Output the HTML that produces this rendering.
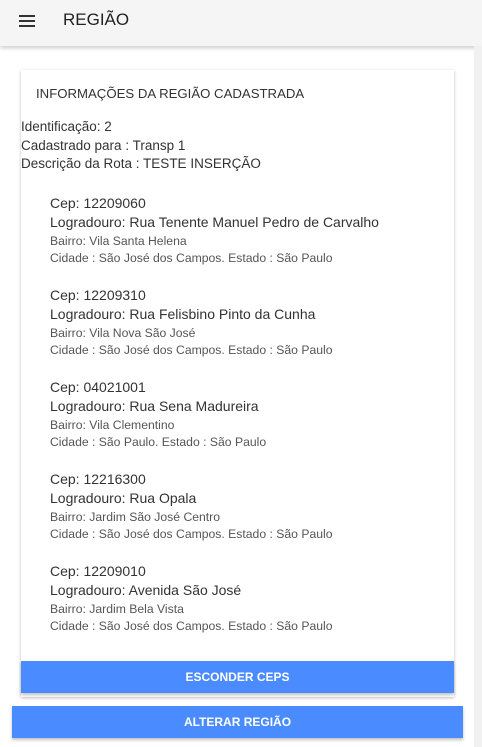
<!DOCTYPE html>
<html><head><meta charset="utf-8"><style>
*{margin:0;padding:0;box-sizing:border-box}
body{width:482px;height:747px;background:#fff;font-family:"Liberation Sans",sans-serif;color:#333;position:relative;overflow:hidden}
.hdr{position:absolute;left:0;top:0;width:482px;height:46px;background:#f5f5f5;box-shadow:0 2px 4px rgba(0,0,0,.2)}
.hdr .t{position:absolute;left:63px;top:10px;font-size:17px;color:#222}
.bar{position:absolute;left:19px;width:16px;height:2px;background:#333}
.sb{position:absolute;right:0;top:46px;width:8px;height:701px;background:#f1f1f1}
.card{position:absolute;left:21px;top:70px;width:433px;height:627px;background:#fff;box-shadow:0 1px 3px rgba(0,0,0,.25)}
.a{position:absolute;white-space:nowrap}
.blk{position:absolute;left:50px;white-space:nowrap}
.blk div{font-size:14px;line-height:18.5px;height:18.5px}
.blk div.s{font-size:12.2px;color:#555;line-height:17px;height:17px;position:relative;top:1.5px}
.btn{position:absolute;background:#4a8cff;color:#fff;font-weight:bold;font-size:12px;text-align:center;box-shadow:0 2px 3px rgba(0,0,0,.25)}
</style></head><body>
<div class="hdr"><div class="bar" style="top:15px"></div><div class="bar" style="top:20px"></div><div class="bar" style="top:25px"></div><div class="t">REGIÃO</div></div>
<div class="sb"></div>
<div class="card"></div>
<div class="a" style="left:36px;top:86px;font-size:13.2px">INFORMAÇÕES DA REGIÃO CADASTRADA</div>
<div class="a" style="left:21px;top:118px;font-size:13.5px;line-height:18.5px">Identificação: 2<br>Cadastrado para : Transp 1<br>Descrição da Rota : TESTE INSERÇÃO</div>

<div class="blk" style="top:194px"><div>Cep: 12209060</div><div>Logradouro: Rua Tenente Manuel Pedro de Carvalho</div><div class="s">Bairro: Vila Santa Helena</div><div class="s">Cidade : São José dos Campos. Estado : São Paulo</div></div>
<div class="blk" style="top:286px"><div>Cep: 12209310</div><div>Logradouro: Rua Felisbino Pinto da Cunha</div><div class="s">Bairro: Vila Nova São José</div><div class="s">Cidade : São José dos Campos. Estado : São Paulo</div></div>
<div class="blk" style="top:378px"><div>Cep: 04021001</div><div>Logradouro: Rua Sena Madureira</div><div class="s">Bairro: Vila Clementino</div><div class="s">Cidade : São Paulo. Estado : São Paulo</div></div>
<div class="blk" style="top:470px"><div>Cep: 12216300</div><div>Logradouro: Rua Opala</div><div class="s">Bairro: Jardim São José Centro</div><div class="s">Cidade : São José dos Campos. Estado : São Paulo</div></div>
<div class="blk" style="top:562px"><div>Cep: 12209010</div><div>Logradouro: Avenida São José</div><div class="s">Bairro: Jardim Bela Vista</div><div class="s">Cidade : São José dos Campos. Estado : São Paulo</div></div>

<div class="btn" style="left:21px;top:661px;width:433px;height:32px;line-height:32px">ESCONDER CEPS</div>
<div class="btn" style="left:12px;top:706px;width:451px;height:32px;line-height:32px">ALTERAR REGIÃO</div>
</body></html>
